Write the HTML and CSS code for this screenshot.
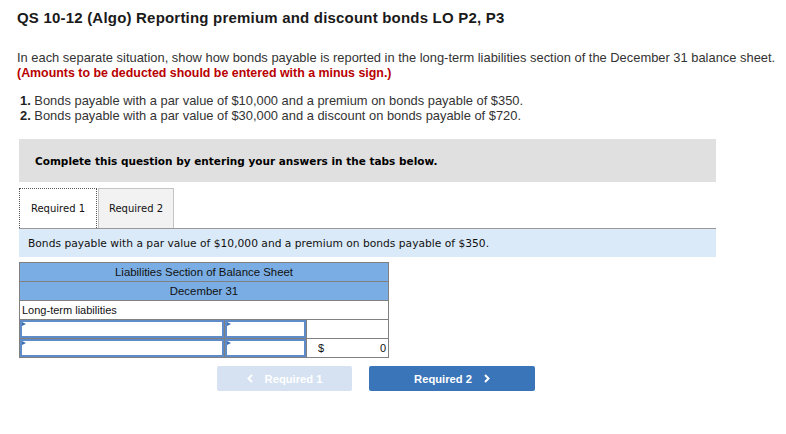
FILE: index.html
```html
<!DOCTYPE html>
<html lang="en">
<head>
<meta charset="utf-8">
<title>QS 10-12 (Algo)</title>
<link rel="stylesheet" href="styles.css">
</head>
<body>
<div class="page">
  <h1 class="title">QS 10-12 (Algo) Reporting premium and discount bonds LO P2, P3</h1>
  <p class="intro">In each separate situation, show how bonds payable is reported in the long-term liabilities section of the December 31 balance sheet.<br><span class="note">(Amounts to be deducted should be entered with a minus sign.)</span></p>
  <ol class="items">
    <li><b>1.</b> Bonds payable with a par value of $10,000 and a premium on bonds payable of $350.</li>
    <li><b>2.</b> Bonds payable with a par value of $30,000 and a discount on bonds payable of $720.</li>
  </ol>
  <div class="banner">Complete this question by entering your answers in the tabs below.</div>
  <div class="tabs">
    <div class="tab active">Required 1</div>
    <div class="tab">Required 2</div>
  </div>
  <div class="prompt">Bonds payable with a par value of $10,000 and a premium on bonds payable of $350.</div>
  <table class="sheet">
    <tr><th colspan="3">Liabilities Section of Balance Sheet</th></tr>
    <tr><th colspan="3">December 31</th></tr>
    <tr><td colspan="3" class="label">Long-term liabilities</td></tr>
    <tr>
      <td class="c1"><div class="inp"></div></td>
      <td class="c2"><div class="inp"></div></td>
      <td class="c3"></td>
    </tr>
    <tr>
      <td class="c1"><div class="inp"></div></td>
      <td class="c2"><div class="inp"></div></td>
      <td class="c3"><div class="total"><span>$</span><span>0</span></div></td>
    </tr>
  </table>
  <div class="nav">
    <div class="btn prev"><svg class="chev left" width="6" height="9" viewBox="0 0 6 9"><polyline points="5,1 1.5,4.5 5,8" fill="none" stroke="#fff" stroke-width="2"/></svg>Required 1</div>
    <div class="btn next">Required 2<svg class="chev right" width="6" height="9" viewBox="0 0 6 9"><polyline points="1,1 4.5,4.5 1,8" fill="none" stroke="#fff" stroke-width="2"/></svg></div>
  </div>
</div>
</body>
</html>
```
FILE: styles.css
```css
html, body { margin: 0; padding: 0; background: #fff; }
.page { padding: 9px 0 0 17px; font-family: "Liberation Sans", Arial, sans-serif; color: #333; }
.title { margin: 0; font-size: 15px; font-weight: bold; color: #1a1a1a; line-height: 18px; letter-spacing: 0.2px; }
.intro { margin: 23px 0 0 0; font-size: 12.9px; line-height: 15px; color: #333; }
.note { color: #b80000; font-weight: bold; font-size: 12.4px; }
.items { list-style: none; margin: 12px 0 0 3px; padding: 0; font-size: 12.9px; line-height: 15px; }
.items b { color: #222; }
.banner { margin: 16px 0 0 2px; width: 681px; height: 43px; padding-left: 16px; background: #e0e0e0; font-family: "DejaVu Sans", Verdana, sans-serif; font-weight: bold; font-size: 10.5px; color: #000; display: flex; align-items: center; }
.tabs { display: flex; margin: 6px 0 0 2px; height: 40px; }
.tab { box-sizing: border-box; height: 40px; width: 76px; display: flex; align-items: center; justify-content: center; font-family: "DejaVu Sans", Verdana, sans-serif; font-size: 10px; color: #111; border: 1px solid #c4c4c4; border-bottom: none; background: #f2f2f2; }
.tab.active { width: 78px; margin-right: 1px; background: #fff; border: 1px dotted #555; border-bottom: none; }
.prompt { margin-left: 2px; width: 697px; height: 29px; border-top: 1px solid #999; background: #dbeaf8; font-family: "DejaVu Sans", Verdana, sans-serif; font-size: 10.7px; color: #111; display: flex; align-items: center; padding-left: 9px; box-sizing: border-box; }
.sheet { margin: 5px 0 0 2px; border-collapse: collapse; width: 370px; font-family: "Liberation Sans", Arial, sans-serif; font-size: 11px; color: #111; }
.sheet th { background: #7aade3; font-weight: normal; font-size: 11.4px; height: 18px; padding: 0; border: 1px solid #808080; text-align: center; }
.sheet td { border: 1px solid #808080; padding: 0; height: 18px; }
.sheet td.label { padding-left: 2px; }
.sheet .c1 { width: 204px; }
.sheet .c2 { width: 81px; }
.inp { position: relative; height: 18px; box-sizing: border-box; border: 2px solid #5f8cc8; background: #fff; }
.inp::before { content: ""; position: absolute; left: 0; top: 0; border-left: 4px solid #3d6fb3; border-top: 2px solid transparent; border-bottom: 2px solid transparent; }
.total { display: flex; justify-content: space-between; padding: 0 2px 0 11px; }
.nav { display: flex; gap: 17px; margin: 8px 0 0 200px; }
.btn { height: 25px; border-radius: 2px; display: flex; align-items: center; justify-content: center; font-weight: bold; font-size: 11.2px; color: #fff; }
.prev { width: 135px; background: #d6e2f1; }
.next { width: 166px; background: #3a75b9; }
.chev { display: block; }
.chev.left { margin-right: 12px; }
.chev.right { margin-left: 12px; }
```
